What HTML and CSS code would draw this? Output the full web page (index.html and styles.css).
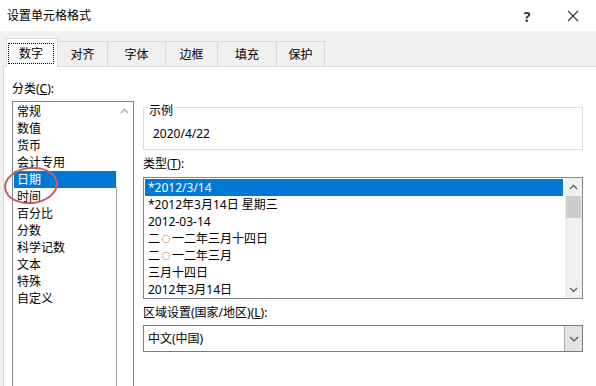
FILE: index.html
```html
<!DOCTYPE html>
<html lang="zh-CN">
<head>
    <meta charset="UTF-8">
    <meta name="viewport" content="width=device-width, initial-scale=1.0">
    <title>设置单元格格式</title>
    <link rel="stylesheet" href="styles.css">
</head>
<body>
    <div class="titlebar">
        <span class="title">设置单元格格式</span>
        <span class="help">?</span>
        <span class="close">
            <svg width="12" height="12" viewBox="0 0 12 12"><path d="M1 1 L11 11 M11 1 L1 11" stroke="#333" stroke-width="1.1" fill="none"/></svg>
        </span>
    </div>

    <div class="dialog">
        <ul class="tabs">
            <li class="tab active" style="width: 52px"><span class="focus">数字</span></li>
            <li class="tab" style="width: 50px">对齐</li>
            <li class="tab" style="width: 58px">字体</li>
            <li class="tab" style="width: 52px">边框</li>
            <li class="tab" style="width: 59px">填充</li>
            <li class="tab" style="width: 48px">保护</li>
        </ul>

        <div class="panel">
            <div class="col-left">
                <div class="label">分类(<u>C</u>):</div>
                <div class="listbox category">
                    <ul class="items">
                        <li>常规</li>
                        <li>数值</li>
                        <li>货币</li>
                        <li>会计专用</li>
                        <li class="selected">日期</li>
                        <li>时间</li>
                        <li>百分比</li>
                        <li>分数</li>
                        <li>科学记数</li>
                        <li>文本</li>
                        <li>特殊</li>
                        <li>自定义</li>
                    </ul>
                    <div class="vscroll plain">
                        <div class="arrow">
                            <svg width="9" height="6" viewBox="0 0 9 6"><path d="M1 5 L4.5 1.5 L8 5" stroke="#a6a6a6" stroke-width="1.3" fill="none"/></svg>
                        </div>
                        <div class="track-line"></div>
                    </div>
                </div>
            </div>

            <div class="col-right">
                <fieldset class="sample">
                    <legend>示例</legend>
                    <div class="sample-value">2020/4/22</div>
                </fieldset>

                <div class="label type-label">类型(<u>T</u>):</div>
                <div class="listbox types">
                    <ul class="items">
                        <li class="selected">*2012/3/14</li>
                        <li>*2012年3月14日 星期三</li>
                        <li>2012-03-14</li>
                        <li>二<span class="zero">○</span>一二年三月十四日</li>
                        <li>二<span class="zero">○</span>一二年三月</li>
                        <li>三月十四日</li>
                        <li>2012年3月14日</li>
                    </ul>
                    <div class="vscroll">
                        <div class="arrow">
                            <svg width="9" height="6" viewBox="0 0 9 6"><path d="M1 5 L4.5 1.5 L8 5" stroke="#606060" stroke-width="1.3" fill="none"/></svg>
                        </div>
                        <div class="thumb"></div>
                        <div class="spacer"></div>
                        <div class="arrow">
                            <svg width="9" height="6" viewBox="0 0 9 6"><path d="M1 1 L4.5 4.5 L8 1" stroke="#606060" stroke-width="1.3" fill="none"/></svg>
                        </div>
                    </div>
                </div>

                <div class="label locale-label">区域设置(国家/地区)(<u>L</u>):</div>
                <div class="combo">
                    <span class="combo-text">中文(中国)</span>
                    <span class="combo-btn">
                        <svg width="10" height="6" viewBox="0 0 10 6"><path d="M1 1 L5 5 L9 1" stroke="#555" stroke-width="1.2" fill="none"/></svg>
                    </span>
                </div>
            </div>
        </div>
    </div>

    <!-- red mark around the selected category -->
    <div class="mark"></div>
</body>
</html>
```

FILE: styles.css
```css
body {
    margin: 0;
    width: 596px;
    height: 386px;
    overflow: hidden;
    position: relative;
    background: #f0f0f0;
    color: #000;
    font-family: "Noto Sans", "Noto Sans CJK SC", sans-serif;
    font-size: 12px;
    line-height: 17px;
}

ul {
    list-style: none;
    margin: 0;
    padding: 0;
}

u {
    text-decoration: underline;
    text-underline-offset: 1px;
}

.titlebar {
    height: 31px;
    background: #fff;
    display: flex;
    align-items: center;
    padding-left: 7px;
}

.title {
    flex: 1;
    font-size: 12px;
}

.help {
    width: 46px;
    text-align: center;
    font-size: 14px;
    font-weight: bold;
    color: #333;
    margin-top: 1px;
}

.close {
    width: 46px;
    display: flex;
    justify-content: center;
}

.dialog {
    padding-top: 7px;
}

.tabs {
    display: flex;
    align-items: flex-end;
    height: 28px;
    margin-left: 6px;
    position: relative;
    z-index: 1;
}

.tab {
    height: 25px;
    line-height: 25px;
    text-align: center;
    border: 1px solid #d9d9d9;
    border-bottom: none;
    border-left: none;
    box-sizing: border-box;
    background: #f0f0f0;
}

.tab.active {
    height: 29px;
    margin-bottom: -1px;
    background: #fff;
    border-left: 1px solid #d9d9d9;
    padding: 4px 3px 2px 1px;
}

.focus {
    display: block;
    border: 1px dotted #000;
    line-height: 19px;
}

.panel {
    margin-left: 3px;
    width: 585px;
    height: 307px;
    overflow: hidden;
    background: #fff;
    border: 1px solid #d9d9d9;
    border-bottom: none;
    display: grid;
    grid-template-columns: 122px 440px;
    column-gap: 9px;
    padding: 13px 5px 0 8px;
}

.label {
    height: 17px;
}

.listbox {
    border: 1px solid #828790;
    background: #fff;
    display: flex;
}

.listbox .items {
    flex: 1;
}

.listbox li {
    height: 17px;
    padding-left: 3px;
    white-space: nowrap;
}

.listbox li.selected {
    background: #0078d7;
    color: #fff;
}

.zero {
    font-size: 8px;
    vertical-align: 1px;
    margin: 0 2px;
}

.category {
    margin-top: 4px;
    height: 300px;
}

.category .items {
    padding: 1px 0 0 1px;
}

.vscroll {
    width: 17px;
    display: flex;
    flex-direction: column;
    background: #f0f0f0;
}

.vscroll.plain {
    background: #fff;
}

.vscroll .arrow {
    height: 17px;
    display: flex;
    align-items: center;
    justify-content: center;
}

.track-line {
    margin-top: 68px;
    flex: 1;
    border-left: 1px solid #a8a8a8;
}

.thumb {
    height: 22px;
    margin: 1px 1px 0 1px;
    background: #cdcdcd;
}

.spacer {
    flex: 1;
}

.sample {
    margin: 16px 0 0 0;
    padding: 0 9px 7px;
    border: 1px solid #dcdcdc;
    min-width: 0;
}

.sample legend {
    padding: 6px 1px 0;
    margin-left: -5px;
    line-height: 17px;
}

.sample-value {
    padding-top: 6px;
}

.type-label {
    margin-top: 5px;
}

.types {
    margin-top: 5px;
    height: 120px;
}

.types .items {
    padding: 1px 1px 0 1px;
}

.types .vscroll {
    margin-left: 1px;
}

.locale-label {
    margin-top: 5px;
}

.combo {
    margin-top: 4px;
    height: 27px;
    box-sizing: border-box;
    border: 1px solid #7a7a7a;
    display: flex;
}

.combo-text {
    flex: 1;
    line-height: 25px;
    padding-left: 4px;
}

.combo-btn {
    width: 17px;
    background: #e3e3e3;
    border-left: 1px solid #adadad;
    display: flex;
    align-items: center;
    justify-content: center;
}

.mark {
    position: absolute;
    left: 4px;
    top: 167px;
    width: 50px;
    height: 33px;
    border: 2px solid #cd5a63;
    border-radius: 50%;
    transform: rotate(-6deg);
}
```
